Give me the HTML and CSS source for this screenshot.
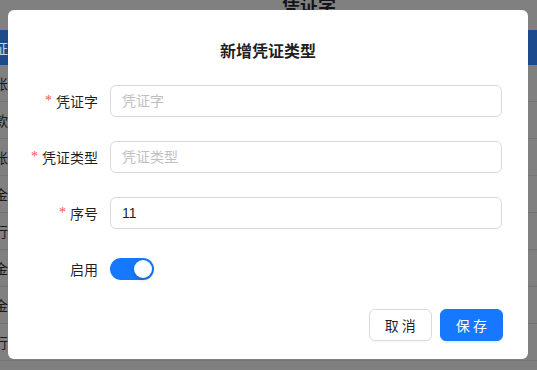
FILE: index.html
```html
<!DOCTYPE html>
<html lang="zh">
<head>
<meta charset="utf-8">
<title>新增凭证类型</title>
<link rel="stylesheet" href="styles.css">
</head>
<body>
<div class="page">
  <div class="page-title">凭证字</div>
  <div class="table">
    <div class="thead"><span class="cell">凭证</span></div>
    <div class="row"><span class="cell">记账</span></div>
    <div class="row"><span class="cell">收款</span></div>
    <div class="row"><span class="cell">转账</span></div>
    <div class="row"><span class="cell">现金</span></div>
    <div class="row"><span class="cell">银行</span></div>
    <div class="row"><span class="cell">现金</span></div>
    <div class="row"><span class="cell">现金</span></div>
    <div class="row"><span class="cell">银行</span></div>
  </div>
</div>

<div class="modal">
  <div class="modal-title">新增凭证类型</div>
  <form class="form">
    <label class="label"><span class="req">*</span>凭证字</label>
    <input class="input" type="text" placeholder="凭证字">
    <label class="label"><span class="req">*</span>凭证类型</label>
    <input class="input" type="text" placeholder="凭证类型">
    <label class="label"><span class="req">*</span>序号</label>
    <input class="input" type="text" value="11">
    <label class="label">启用</label>
    <div class="ctrl"><span class="switch"><span class="knob"></span></span></div>
  </form>
  <div class="footer">
    <button class="btn" type="button">取 消</button>
    <button class="btn btn-primary" type="button">保 存</button>
  </div>
</div>
</body>
</html>
```
FILE: styles.css
```css
* { box-sizing: border-box; }
html, body { margin: 0; padding: 0; }
body {
  width: 537px;
  height: 370px;
  overflow: hidden;
  background: #808080;
  font-family: "Noto Sans CJK SC", "Liberation Sans", sans-serif;
  position: relative;
}
.page {
  display: flex;
  flex-direction: column;
}
.page-title {
  height: 30px;
  margin-top: -7px;
  padding-left: 282px;
  font-size: 18px;
  font-weight: 700;
  color: #141414;
  line-height: 24px;
}
.table {
  display: flex;
  flex-direction: column;
  margin-top: 7px;
}
.thead {
  height: 35px;
  background: #1d4a8a;
  display: flex;
  align-items: center;
}
.row {
  height: 37px;
  border-bottom: 1px solid #747474;
  display: flex;
  align-items: center;
}
.cell {
  margin-left: -20px;
  font-size: 14px;
  color: #1a1a1a;
  white-space: nowrap;
}
.thead .cell { color: #c9d3e2; }

.modal {
  position: absolute;
  left: 8px;
  top: 10px;
  width: 520px;
  height: 349px;
  background: #fff;
  border-radius: 6px;
  display: flex;
  flex-direction: column;
  padding-top: 28px;
}
.modal-title {
  text-align: center;
  font-size: 16px;
  font-weight: 700;
  line-height: 24px;
  color: rgba(0,0,0,0.88);
  margin-bottom: 23px;
}
.form {
  display: grid;
  grid-template-columns: 90px 1fr;
  grid-auto-rows: 32px;
  column-gap: 12px;
  row-gap: 24px;
  padding-right: 26px;
  margin: 0;
}
.label {
  display: flex;
  align-items: center;
  justify-content: flex-end;
  font-size: 14px;
  color: rgba(0,0,0,0.88);
}
.req {
  color: #ff4d4f;
  font-family: "Liberation Serif", serif;
  font-size: 14px;
  margin-right: 4px;
  line-height: 1;
}
.input {
  height: 32px;
  border: 1px solid #d9d9d9;
  border-radius: 6px;
  padding: 4px 11px;
  font-size: 14px;
  font-family: "Liberation Sans", "Noto Sans CJK SC", sans-serif;
  color: rgba(0,0,0,0.88);
  outline: none;
}
.input::placeholder {
  color: #bfbfbf;
  font-family: "Noto Sans CJK SC", sans-serif;
}
.ctrl {
  display: flex;
  align-items: center;
}
.switch {
  width: 44px;
  height: 22px;
  border-radius: 11px;
  background: #1677ff;
  display: flex;
  justify-content: flex-end;
  align-items: center;
  padding: 2px;
}
.knob {
  width: 18px;
  height: 18px;
  border-radius: 50%;
  background: #fff;
  box-shadow: 0 2px 4px rgba(0,35,11,0.2);
}
.footer {
  display: flex;
  justify-content: flex-end;
  gap: 8px;
  margin-top: 24px;
  padding-right: 25px;
}
.btn {
  height: 32px;
  padding: 4px 15px;
  font-size: 14px;
  font-family: "Noto Sans CJK SC", sans-serif;
  border-radius: 6px;
  border: 1px solid #d9d9d9;
  background: #fff;
  color: rgba(0,0,0,0.88);
  box-shadow: 0 2px 0 rgba(0,0,0,0.02);
}
.btn-primary {
  background: #1677ff;
  border-color: #1677ff;
  color: #fff;
  box-shadow: 0 2px 0 rgba(5,145,255,0.1);
}
```
